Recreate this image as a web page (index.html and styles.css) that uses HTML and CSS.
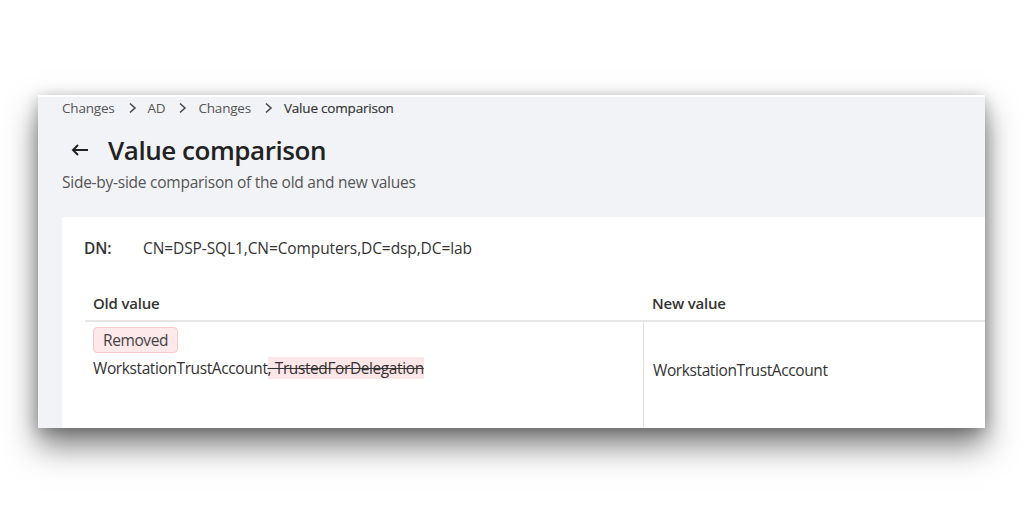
FILE: index.html
```html
<!DOCTYPE html>
<html>
<head>
<meta charset="utf-8">
<link rel="stylesheet" href="styles.css">
</head>
<body>
<div class="frame">
  <div class="page-head">
    <nav class="crumbs">
      <span>Changes</span><svg class="sep" width="9" height="12" viewBox="0 0 9 12"><path d="M2 1.5L7 6l-5 4.5" fill="none" stroke="#444" stroke-width="1.5"/></svg>
      <span>AD</span><svg class="sep" width="9" height="12" viewBox="0 0 9 12"><path d="M2 1.5L7 6l-5 4.5" fill="none" stroke="#444" stroke-width="1.5"/></svg>
      <span>Changes</span><svg class="sep" width="9" height="12" viewBox="0 0 9 12"><path d="M2 1.5L7 6l-5 4.5" fill="none" stroke="#444" stroke-width="1.5"/></svg>
      <span class="current">Value comparison</span>
    </nav>
    <div class="title-row">
      <svg class="back" width="18" height="14" viewBox="0 0 18 14"><path d="M17 7H2M7 2L2 7l5 5" fill="none" stroke="#222" stroke-width="2"/></svg>
      <h1>Value comparison</h1>
    </div>
    <p class="subtitle">Side-by-side comparison of the old and new values</p>
  </div>
  <div class="card">
    <div class="dn-row"><span class="dn-label">DN:</span><span class="dn-value">CN=DSP-SQL1,CN=Computers,DC=dsp,DC=lab</span></div>
    <div class="table">
      <div class="th">Old value</div>
      <div class="th">New value</div>
      <div class="td old">
        <span class="badge">Removed</span>
        <div class="val">WorkstationTrustAccount<del>, TrustedForDelegation</del></div>
      </div>
      <div class="td new"><div class="val">WorkstationTrustAccount</div></div>
    </div>
  </div>
</div>
</body>
</html>
```
FILE: styles.css
```css
html, body { margin: 0; padding: 0; background: #fff; }
body { font-family: "Open Sans", "Noto Sans", sans-serif; color: #333; min-height: 100vh; padding-top: 95px; box-sizing: border-box; }
.frame {
  margin-left: 38px;
  width: 947px;
  height: 331px;
  background: #f2f3f7;
  border-top: 2px solid #fff;
  box-shadow: 0 18px 30px rgba(0,0,0,0.5), 0 3px 14px rgba(0,0,0,0.25);
  overflow: hidden;
  display: flex;
  flex-direction: column;
}
.page-head { padding: 1px 0 0 24px; height: 120px; box-sizing: border-box; }
.crumbs { font-size: 13.5px; line-height: 20px; color: #555; display: flex; align-items: center; letter-spacing: -0.2px; }
.crumbs .sep { margin: 0 11px 0 13px; }
.crumbs .current { color: #333; font-weight: 500; -webkit-text-stroke: 0.15px #333; }
.title-row { display: flex; align-items: center; margin-top: 16px; height: 32px; }
.back { margin: 0 19px 0 9px; }
h1 { margin: 0; font-size: 26px; font-weight: 600; color: #222; letter-spacing: -0.45px; }
.subtitle { margin: 5px 0 0; font-size: 15.5px; color: #555; letter-spacing: -0.25px; }
.card { background: #fff; margin-left: 24px; flex: 1; padding: 20px 0 0 22px; }
.dn-row { font-size: 15.5px; line-height: 22px; display: flex; letter-spacing: -0.1px; }
.dn-label { width: 59px; font-weight: 600; color: #333; }
.dn-value { color: #333; }
.table { display: grid; grid-template-columns: 559px 1fr; margin-top: 34px; margin-left: 1px; }
.th { font-size: 15px; font-weight: 600; color: #333; padding: 0 0 7px 8px; line-height: 20px; border-bottom: 2px solid #e6e6e6; letter-spacing: -0.2px; }
.td { font-size: 15.5px; color: #333; letter-spacing: -0.4px; min-height: 100px; }
.td.old { padding: 5px 0 0 8px; border-right: 1px solid #e3e3e3; }
.td.new { padding: 37px 0 0 9px; min-height: 63px; }
.badge { display: inline-block; background: #fde8ea; border: 1px solid #f6c9ce; border-radius: 4px; padding: 2px 9px; line-height: 20px; color: #444; }
.val { line-height: 22px; margin-top: 4px; }
.td.new .val { margin-top: 0; }
del { background: #fde6e8; color: #333; text-decoration-thickness: 1px; }
```
